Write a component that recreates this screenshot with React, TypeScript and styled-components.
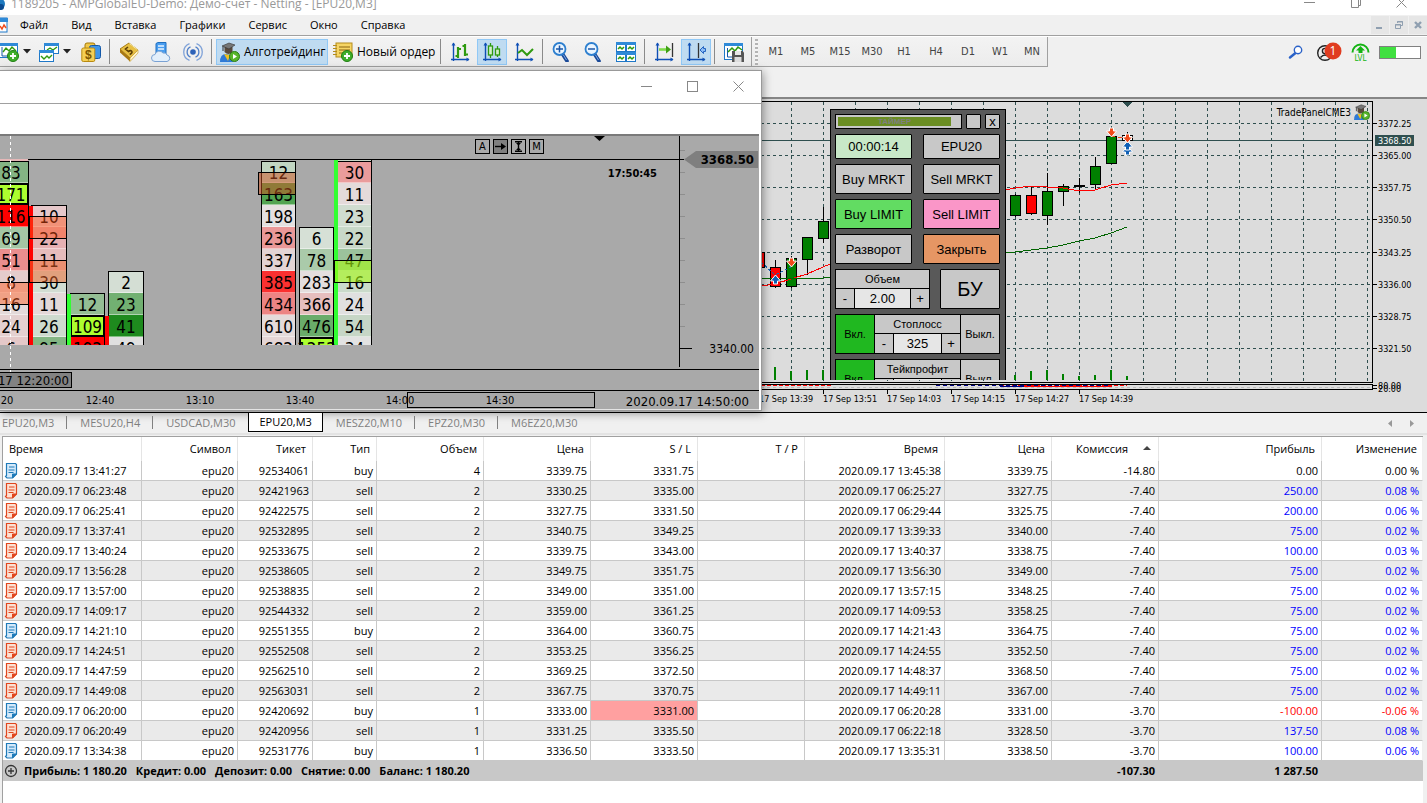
import React from "react";
import styled, { createGlobalStyle, css } from "styled-components";

const UI = `"Open Sans", "Noto Sans", sans-serif`;
const TAHOMA = `"DejaVu Sans Condensed", "DejaVu Sans", sans-serif`;
const ARIAL = `"Liberation Sans", Arial, sans-serif`;

const GlobalStyle = createGlobalStyle`
  * { box-sizing: border-box; }
  body { margin: 0; background: #f0f0f0; font-family: ${UI}; font-size: 12px; color: #000; overflow: hidden; }
  button, input { font: inherit; color: inherit; margin: 0; padding: 0; border: 0; background: none; border-radius: 0; }
  svg { display: block; }
`;

const Shell = styled.div`
  display: flex;
  flex-direction: column;
  min-height: 100vh;
`;

/* ---------- title and menu ---------- */

const TitleBar = styled.header`
  display: flex;
  justify-content: space-between;
  height: 15px;
  background: #fff;
  color: #999;
  overflow: hidden;
`;
const TitleText = styled.div`
  display: flex;
  gap: 5px;
  margin-top: -5px;
  line-height: 17px;
  white-space: nowrap;
`;
const TitleControls = styled.div`
  display: flex;
  gap: 35px;
  margin-top: -10px;
  padding-right: 20px;
`;
const PlainButton = styled.button`
  display: flex;
  align-items: center;
  justify-content: center;
`;

const MenuBar = styled.nav`
  display: flex;
  align-items: center;
  gap: 1px;
  height: 21px;
  background: #f0f0f0;
  border-bottom: 1px solid #a0a0a0;
  font-size: 11px;
`;
const MenuItem = styled.button`
  padding: 0 11px;
  line-height: 18px;
`;
const MdiButtons = styled.div`
  display: flex;
  gap: 1px;
  margin-left: auto;
`;
const MdiButton = styled(PlainButton)`
  width: 18px;
  height: 18px;
  background: #e6e6e6;
`;

/* ---------- toolbar ---------- */

const ToolRow = styled.div`
  display: flex;
  justify-content: space-between;
  height: 31px;
  border-top: 1px solid #fff;
`;
const Toolbar = styled.div`
  display: flex;
  align-items: center;
  gap: 2px;
  margin-left: -4px;
  border-bottom: 1px solid #a0a0a0;
  border-right: 1px solid #a0a0a0;
  background: linear-gradient(#f3f3f3, #ececec);
`;
const ToolButton = styled.button<{ $on?: boolean; $split?: boolean; $wide?: number }>`
  display: flex;
  align-items: center;
  justify-content: ${(p) => (p.$wide ? "flex-start" : "center")};
  gap: 4px;
  width: ${(p) => (p.$wide ? p.$wide : p.$split ? 38 : 30)}px;
  height: 26px;
  padding-left: ${(p) => (p.$wide ? 3 : 0)}px;
  white-space: nowrap;
  ${(p) => p.$on && css`background: #bfdbf1; border: 1px solid #90c8f6;`}
`;
const Separator = styled.span`
  width: 1px;
  height: 25px;
  margin: 0 2px 0 1px;
  background: #8a8a8a;
`;
const Grip = styled.span`
  width: 3px;
  height: 26px;
  margin: 0 1px;
  background: repeating-linear-gradient(#b4b4b4 0 2px, #f4f4f4 2px 4px);
`;
const Divider = styled.span`
  width: 1px;
  height: 30px;
  background: #a0a0a0;
`;
const Frame = styled.button`
  width: 30px;
  height: 26px;
  font-family: ${TAHOMA};
  font-size: 11px;
  color: #444;
`;
const Status = styled.div`
  display: flex;
  align-items: center;
  gap: 9px;
  padding-right: 6px;
`;
const Meter = styled.div`
  width: 42px;
  height: 13px;
  border: 1px solid #808080;
  background: linear-gradient(90deg, #40e040 0 40%, #fff 40%);
`;

/* ---------- workspace ---------- */

const Workspace = styled.main`
  position: relative;
  display: flex;
  flex-direction: column;
`;
const DockStrip = styled.div`
  height: 32px;
  border-bottom: 2px solid #868686;
`;
const ChartArea = styled.section`
  display: flex;
  height: 314px;
  padding-top: 2px;
  background: #dcdcdc;
  border-bottom: 1px solid #000;
`;
const PlotColumn = styled.div`
  flex: 1;
  min-width: 0;
`;
const PricePane = styled.div`
  position: relative;
  height: 282px;
  overflow: hidden;
  border: solid #000;
  border-width: 1px 1px 1px 0;
`;
const ExpertTag = styled.div`
  position: absolute;
  top: 2px;
  right: 2px;
  display: flex;
  align-items: center;
  gap: 3px;
  font-family: ${TAHOMA};
  font-size: 10px;
`;
const ChartSvg = styled.svg`
  width: 100%;
  font-family: ${TAHOMA};
`;
const AxisSvg = styled.svg`
  width: 54px;
  font-family: ${TAHOMA};
`;

/* ---------- trade panel ---------- */

const PanelClip = styled.div`
  position: absolute;
  left: 830px;
  top: 7px;
  bottom: 2px;
  overflow: hidden;
`;
const Panel = styled.div`
  width: 176px;
  display: flex;
  flex-direction: column;
  gap: 5px;
  padding: 4px 5px 4px 4px;
  background: #595959;
  border: 1px solid #000;
  font-family: ${ARIAL};
`;
const PanelRow = styled.div<{ $gap: number }>`
  display: flex;
  gap: ${(p) => p.$gap}px;
`;
const Timer = styled.div`
  display: flex;
  flex: 1;
  height: 15px;
  padding: 2px 0 2px 2px;
  background: #c8c8c8;
  border: 1px solid #000;
`;
const TimerFill = styled.span`
  width: 113px;
  background: #6b8e23;
  color: #7f7f7f;
  font-size: 8px;
  font-weight: 700;
  line-height: 9px;
  text-align: center;
`;
const PanelButton = styled.button<{ $h: number; $bg?: string; $w?: number; $size?: number }>`
  flex: ${(p) => (p.$w ? "none" : 1)};
  width: ${(p) => (p.$w ? p.$w + "px" : "auto")};
  height: ${(p) => p.$h}px;
  background: ${(p) => p.$bg ?? "#c8c8c8"};
  border: 1px solid #000;
  border-radius: 1px;
  font-size: ${(p) => p.$size ?? 13}px;
  line-height: 13px;
  white-space: nowrap;
`;
const Box = styled.div<{ $w: number }>`
  display: flex;
  gap: 1px;
  width: ${(p) => p.$w}px;
  height: 40px;
  border: 1px solid #000;
  background: #000;
  font-size: 11px;
`;
const BoxSide = styled.button<{ $bg?: string }>`
  width: 38px;
  background: ${(p) => p.$bg ?? "#c8c8c8"};
`;
const BoxMid = styled.div`
  flex: 1;
  display: flex;
  flex-direction: column;
  gap: 1px;
  min-width: 0;
`;
const BoxLabel = styled.label`
  height: 18px;
  line-height: 19px;
  text-align: center;
  background: #c8c8c8;
`;
const Spinner = styled.div`
  flex: 1;
  display: flex;
  gap: 1px;
`;
const Step = styled.button`
  width: 18px;
  background: #c8c8c8;
  font-size: 13px;
  line-height: 13px;
`;
const Value = styled.input`
  flex: 1;
  min-width: 0;
  width: 20px;
  background: #e6e6e6;
  text-align: center;
  font-size: 13px;
`;

/* ---------- floating cluster window ---------- */

const FloatWindow = styled.section`
  position: absolute;
  left: 0;
  top: 3px;
  width: 762px;
  display: flex;
  flex-direction: column;
  background: #fff;
  border: solid #999;
  border-width: 1px 1px 1px 0;
  box-shadow: 1px 2px 9px rgba(0, 0, 0, 0.4);
`;
const FloatTitle = styled.div`
  display: flex;
  justify-content: flex-end;
  align-items: center;
  gap: 35px;
  height: 33px;
  padding: 0 17px 2px 0;
  border-bottom: 1px solid #a0a0a0;
`;
const FloatSpacer = styled.div`
  height: 30px;
`;
const ClusterView = styled.div`
  position: relative;
  margin-right: 2px;
  border-top: 2px solid #7a7a7a;
  border-bottom: 1px solid #e4e4e4;
  background: #a9a9a9;
`;
const ClusterTools = styled.div`
  position: absolute;
  left: 475px;
  top: 3px;
  display: flex;
  gap: 3px;
`;
const ClusterTool = styled(PlainButton)<{ $on?: boolean }>`
  width: 15px;
  height: 15px;
  border: 1px solid #000;
  background: ${(p) => (p.$on ? "#7f7f7f" : "transparent")};
  font-family: ${TAHOMA};
  font-size: 11px;
  line-height: 13px;
`;

/* ---------- tabs ---------- */

const Tabs = styled.div`
  display: flex;
  height: 22px;
  margin-bottom: 1px;
  margin-left: -11px;
  background: #f0f0f0;
  border-bottom: 2px solid #e3e3e3;
`;
const Tab = styled.button<{ $active?: boolean; $rule?: boolean }>`
  position: relative;
  height: ${(p) => (p.$active ? 19 : 20)}px;
  padding: 0 ${(p) => (p.$active ? 10 : 13)}px;
  font-size: 11px;
  line-height: 18px;
  color: ${(p) => (p.$active ? "#000" : "#7f7f7f")};
  ${(p) => p.$active && css`background: #fff; border: solid #000; border-width: 0 1px 1px;`}
  ${(p) => p.$rule && css`
    &::after { content: ""; position: absolute; right: 0; top: 3px; width: 1px; height: 13px; background: #808080; }
  `}
`;
const TabArrows = styled.div`
  display: flex;
  gap: 18px;
  margin-left: auto;
  padding-right: 13px;
`;

/* ---------- history table ---------- */

const HistoryFrame = styled.section`
  flex: 1;
  margin: 0 4px 0 2px;
  background: #fff;
  border: solid #a0a0a0;
  border-width: 1px 0 0 1px;
`;
const History = styled.table`
  width: 100%;
  table-layout: fixed;
  border-collapse: separate;
  border-spacing: 0;
  font-size: 11px;
  line-height: 18px;
  white-space: nowrap;
`;
const Head = styled.th<{ $left?: boolean }>`
  height: 24px;
  padding: 0 6px;
  font-weight: 400;
  text-align: ${(p) => (p.$left ? "left" : "right")};
  border-right: 1px solid #e5e5e5;
  &:last-child { padding-right: 5px; border-right-color: #efefef; }
`;
const SortMark = styled.span`
  display: inline-block;
  margin: 0 1px 3px 15px;
  border: solid transparent;
  border-width: 0 4px 4px;
  border-bottom-color: #444;
`;
const Row = styled.tr<{ $alt?: boolean }>`
  background: ${(p) => (p.$alt ? "#eaeaea" : "#fff")};
`;
const Cell = styled.td<{ $bg?: string; $color?: string }>`
  height: 20px;
  padding: 0 3px 0 0;
  text-align: right;
  border: solid #c8c8c8;
  border-width: 0 1px 1px 0;
  background: ${(p) => p.$bg ?? "transparent"};
  color: ${(p) => p.$color ?? "#000"};
  &:last-child { border-right-color: #efefef; }
`;
const TimeCell = styled(Cell)`
  padding: 0 0 0 1px;
  text-align: left;
`;
const WithIcon = styled.span`
  display: flex;
  align-items: center;
  gap: 6px;
`;
const SumRow = styled.tr`
  background: #c8c8c8;
  font-weight: 700;
`;
const SumCell = styled.td<{ $left?: boolean }>`
  height: 20px;
  padding: 0 4px 0 1px;
  text-align: ${(p) => (p.$left ? "left" : "right")};
`;
const SumParts = styled.span`
  display: flex;
  gap: 9px;
`;

/* ---------- icons ---------- */

const AXES = (
  <>
    <path d="M3.5 1v18M1 17.5h18" stroke="#0f4fb5" strokeWidth="1.4" fill="none" />
    <path d="M1.5 3.5L3.5 .5l2 3zM16.5 15.5l3 2-3 2z" fill="#0f4fb5" />
  </>
);
const PlusBadge = ({ x, y }: { x: number; y: number }) => (
  <g transform={`translate(${x},${y})`}>
    <circle r="5.5" fill="#3fae2a" stroke="#1f7f12" />
    <path d="M-3 0h6M0-3v6" stroke="#fff" strokeWidth="1.8" />
  </g>
);
const Icon = ({ children, size = 20 }: { children: React.ReactNode; size?: number }) => (
  <svg width={size} height={size} viewBox="0 0 20 20">{children}</svg>
);
const Caret = () => (
  <svg width="8" height="5" viewBox="0 0 8 5"><path d="M0 0h8L4 4.5z" fill="#222" /></svg>
);
const NewChartIcon = () => (
  <Icon>
    <rect x=".5" y="1.5" width="18" height="14" fill="#fff" stroke="#1f78c8" />
    <rect x="0" y="1" width="19" height="3" fill="#2f8ad8" />
    <path d="M3 5v9h12" stroke="#1659a8" fill="none" />
    <path d="M4 10l3-4 3 3 3-4 4 4" stroke="#2f9a10" strokeWidth="1.4" fill="none" />
    <PlusBadge x={14} y={14} />
  </Icon>
);
const WindowsIcon = () => (
  <Icon>
    <rect x="5.5" y="1.5" width="14" height="10" fill="#fff" stroke="#1f78c8" />
    <rect x="5" y="1" width="15" height="3" fill="#2f8ad8" />
    <path d="M8 8l3-2 3 2 4-3" stroke="#2f9a10" strokeWidth="1.4" fill="none" />
    <rect x=".5" y="8.5" width="14" height="11" fill="#fff" stroke="#1f78c8" />
    <rect x="0" y="8" width="15" height="3" fill="#2f8ad8" />
    <path d="M2 14l3 3 3-3 2 2 3-3" stroke="#2f9a10" strokeWidth="1.4" fill="none" />
  </Icon>
);
const DollarIcon = () => (
  <Icon>
    <path d="M4 7V3q0-2 2-2h6q2 0 2 2v6H4z" fill="#f0c84a" stroke="#a57808" />
    <rect x="8.5" y="3.5" width="11" height="13" rx="2" fill="#3f96ea" stroke="#1358a8" />
    <rect x=".8" y="6" width="13" height="13.5" rx="1.500" fill="#f4cf55" stroke="#b98a10" />
    <text x="7.3" y="17" fontFamily={ARIAL} fontSize="12" fontWeight="700" fill="#7d5600" textAnchor="middle">$</text>
  </Icon>
);
const BookIcon = () => (
  <Icon>
    <path d="M1 7L10 1l9 7-8 8z" fill="#e7bf43" stroke="#a87c12" />
    <path d="M1 7l10 9v3.500L1 10.500z" fill="#a87812" />
    <path d="M11 16l8-8v3l-8 8.500z" fill="#fff3c8" stroke="#c89a26" strokeWidth=".6" />
    <path d="M9 5L6.500 7l3 2.500q2-1.500 3.200-.2t-2 3.200" stroke="#5c3e04" strokeWidth="1.600" fill="none" />
    <path d="M10.500 1.500l8 6.200" stroke="#fff3b5" />
  </Icon>
);
const CloudIcon = () => (
  <Icon>
    <path d="M5 1.500l2-1h8v13H5z" fill="#4a9ef0" stroke="#1f6fc0" />
    <path d="M7 4h6M7 7h6" stroke="#e6f3ff" strokeWidth="1.500" />
    <path d="M4 19.500a3.500 3.500 0 010-7 4.500 4.500 0 018-1.500 3.500 3.500 0 014 2 3.300 3.300 0 010 6.500z" fill="#e3effb" stroke="#7aa2d4" />
  </Icon>
);
const SignalIcon = () => (
  <Icon>
    <g fill="none" stroke="#7fa2d8" strokeWidth="1.300">
      <path d="M6.500 1.600a9 9 0 000 16.800M13.500 1.600a9 9 0 010 16.800" />
      <path d="M7.500 4.800a5.700 5.700 0 000 10.400M12.500 4.800a5.700 5.700 0 010 10.400" stroke="#4f7fc8" />
    </g>
    <circle cx="10" cy="10" r="2.800" fill="#2d62b8" />
  </Icon>
);
const ExpertIcon = ({ size = 20 }: { size?: number }) => (
  <Icon size={size}>
    <path d="M0 20q0-8 6-8t7 8z" fill="#2f7ad6" />
    <path d="M4 12l4 7 2-6z" fill="#f0c020" />
    <path d="M4.500 5h8v5q-4 4-8 0z" fill="#5a4a3c" />
    <path d="M2 4l7-3 6 2-6 4z" fill="#777" stroke="#333" strokeWidth=".6" />
    <path d="M3 4.500V9" stroke="#333" />
    <circle cx="14.500" cy="14.500" r="5" fill="#58b52c" stroke="#2b7d10" />
    <path d="M13 12v5l4-2.500z" fill="#fff" />
  </Icon>
);
const OrderIcon = () => (
  <Icon>
    <rect x="3" y="1" width="16" height="14" fill="#f6d564" stroke="#b48c1c" />
    <path d="M0 3.500h4M0 6.500h4M0 9.500h4M0 12.500h4" stroke="#b48c1c" />
    <path d="M6 5h11M6 8h11M6 11h8" stroke="#8a6410" />
    <PlusBadge x={14} y={14} />
  </Icon>
);
const BarsIcon = () => (
  <Icon>{AXES}<path d="M8 5v11M5.500 14h2.500M8 7h3M15 2v12M12.500 4H15M15 12.500h3" stroke="#2f9a10" strokeWidth="2.200" fill="none" /></Icon>
);
const CandleIcon = () => (
  <Icon>
    {AXES}
    <path d="M8.500 1v15M15.500 4v11" stroke="#2f9a10" strokeWidth="1.300" />
    <rect x="6.500" y="4" width="4" height="9" fill="#d5efcc" stroke="#2f9a10" strokeWidth="1.300" />
    <rect x="13.500" y="7" width="4" height="6" fill="#d5efcc" stroke="#2f9a10" strokeWidth="1.300" />
  </Icon>
);
const LineIcon = () => (
  <Icon>{AXES}<path d="M4 11l4-3 5 5 6-6" stroke="#2f9a10" strokeWidth="2" fill="none" /></Icon>
);
const ZoomIcon = ({ plus }: { plus?: boolean }) => (
  <Icon>
    <path d="M10.500 12l4.500 7" stroke="#1a4a98" strokeWidth="3.600" strokeLinecap="round" />
    <path d="M11.500 13l3 5" stroke="#7aa8e8" strokeWidth="1" />
    <circle cx="7.500" cy="7" r="6" fill="#eaf5ff" stroke="#2d7fcf" strokeWidth="1.800" />
    <path d={plus ? "M4 7h7M7.500 3.500v7" : "M4 7h7"} stroke="#1a56a8" strokeWidth="1.500" />
  </Icon>
);
const TileIcon = () => (
  <Icon>
    {[[0, 0], [10, 0], [0, 10], [10, 10]].map(([x, y]) => (
      <g key={`${x}-${y}`} transform={`translate(${x},${y})`}>
        <rect x=".5" y=".5" width="9" height="9" fill="#fff" stroke="#1f78c8" />
        <rect width="10" height="3" fill="#2f8ad8" />
        <path d="M2 7l2-2 2 2 2-2" stroke="#2f9a10" strokeWidth="1.500" fill="none" />
      </g>
    ))}
  </Icon>
);
const ScrollIcon = () => (
  <Icon>{AXES}<path d="M5 7.500h8" stroke="#7fdc4a" strokeWidth="2.600" /><path d="M12 3.500l5 4-5 4z" fill="#3fa015" /><path d="M18.500 1v14" stroke="#333" strokeWidth="1.300" /></Icon>
);
const ShiftIcon = () => (
  <Icon>{AXES}<path d="M12.500 1v15" stroke="#333" strokeWidth="1.300" /><path d="M19.500 6.500h-2v-2L14 8l3.500 3.500v-2h2z" fill="#8dbcf5" stroke="#2563c0" /></Icon>
);
const SaveChartIcon = () => (
  <Icon>
    <rect x=".5" y="1.500" width="18" height="16" fill="#fff" stroke="#1f78c8" />
    <rect x="0" y="1" width="19" height="3" fill="#2f8ad8" />
    <path d="M3.500 6v9h6" stroke="#1659a8" fill="none" />
    <path d="M4 10l4-4 3 3 3-4 4 3" stroke="#2f9a10" strokeWidth="1.500" fill="none" />
    <path d="M8 9h10.500l1.500 1.500V20H8z" fill="#555" />
    <rect x="11" y="9" width="6" height="4" fill="#e8e8e8" />
    <rect x="10.500" y="15" width="7" height="5" fill="#ddd" />
  </Icon>
);
const DealIcon = ({ kind }: { kind: string }) => {
  const line = kind === "buy" ? "#1f7ab8" : "#e0461e";
  const fill = kind === "buy" ? "#d4e9fa" : "#fde0d2";
  return (
    <svg width="14" height="18" viewBox="0 0 14 18">
      <path d="M2.500 1.500h9l1 1v9.500l-4 4H3l-1.500-1.500 1-1z" fill={fill} stroke={line} strokeWidth="1.200" />
      <path d="M5 5h5.500M4.500 8h6M4.500 10.500h5" stroke={line} strokeWidth="1" />
      <path d="M12.500 12l-4 4v-4z" fill={line} stroke={line} strokeLinejoin="round" />
    </svg>
  );
};
const PlusCircle = () => (
  <svg width="14" height="14" viewBox="0 0 14 14">
    <circle cx="7" cy="7" r="5.500" fill="none" stroke="#333" strokeWidth="1.300" />
    <path d="M4 7h6M7 4v6" stroke="#333" strokeWidth="1.300" />
  </svg>
);
const WinGlyph = ({ kind, size = 11 }: { kind: "min" | "max" | "restore" | "close"; size?: number }) => (
  <svg width={size} height={size} viewBox="0 0 11 11" fill="none" stroke="#888">
    {kind === "min" && <path d="M0 5.500h11" />}
    {kind === "max" && <rect x=".5" y=".5" width="10" height="10" />}
    {kind === "restore" && <path d="M1.500 2.500h7v8h-7zM3.500 2.500v-2h7v8h-2" />}
    {kind === "close" && <path d="M.5.5l10 10M10.500.5l-10 10" />}
  </svg>
);
const MdiGlyph = ({ kind }: { kind: string }) => (
  <svg width="10" height="10" viewBox="0 0 10 10" fill="none" stroke="#8f9fb0">
    {kind === "min" && <path d="M1 8h6" strokeWidth="2" />}
    {kind === "restore" && <path d="M1.500 4.500h5v4h-5zM1 5h6M3.500 3V1.500h5v4H7M3 2h6" />}
    {kind === "close" && <path d="M2 2l6 6M8 2L2 8" strokeWidth="2.400" />}
  </svg>
);

/* ---------- main chart ---------- */

const GRID_X = Array.from({ length: 60 }, (_, i) => 791 + 32 * i);
const LEVELS: [number, string][] = [
  [123, "3372.25"], [155, "3365.00"], [187, "3357.75"], [219, "3350.50"],
  [252, "3343.25"], [284, "3336.00"], [316, "3328.75"], [348, "3321.50"],
];
const GREEN = "#008000";
const CANDLES: [number, number, number, number, number, string][] = [
  [759, 252, 267, 250, 268, "#f00"], [775, 267, 286, 260, 288, "#f00"], [791, 258, 286, 256, 288, GREEN],
  [807, 237, 259, 237, 275, GREEN], [823, 221, 238, 207, 243, GREEN], [1015, 195, 215, 194, 217, GREEN],
  [1031, 195, 213, 187, 215, "#f00"], [1047, 191, 215, 173, 225, GREEN], [1063, 186, 191, 184, 206, GREEN],
  [1079, 185, 186, 178, 193, "#000"], [1095, 166, 184, 157, 190, GREEN], [1111, 136, 163, 130, 163, GREEN],
  [1127, 135, 140, 132, 143, "#fff"],
];
const VOLUMES: [number, number][] = [
  [775, 13], [791, 9], [807, 10], [823, 10], [1015, 5], [1031, 9], [1047, 10], [1063, 6], [1079, 4], [1095, 5], [1111, 10], [1127, 4],
];
const Arrow = ({ x, y, up }: { x: number; y: number; up?: boolean }) => (
  <path
    transform={`translate(${x + 0.5},${y}) scale(1,${up ? -1 : 1})`}
    d="M-2-4h4v3h3L0 5-5-1h3z"
    fill={up ? "#0f5fb4" : "#f04a1a"}
    stroke="#fff"
  />
);

const PricePlot = () => (
  <ChartSvg height="280" role="img" aria-label="EPU20,M3">
    <g transform="translate(0,-102)" shapeRendering="crispEdges">
      <g stroke="#2f4f4f" strokeDasharray="3 3">
        {GRID_X.map((x) => <line key={x} x1={x + 0.5} x2={x + 0.5} y1="102" y2="382" />)}
        {LEVELS.map(([y]) => <line key={y} x1="761" x2="100%" y1={y + 0.5} y2={y + 0.5} />)}
      </g>
      <line x1="761" x2="100%" y1="140.500" y2="140.500" stroke="#2f4f4f" />
      {CANDLES.map(([x, top, bottom, high, low, color]) => (
        <g key={x} stroke="#000">
          <line x1={x + 0.5} x2={x + 0.5} y1={high} y2={low} />
          <rect x={x - 4.5} y={top + 0.5} width="10" height={bottom - top} fill={color} />
        </g>
      ))}
      {VOLUMES.map(([x, h]) => <rect key={x} x={x - 1} y={380 - h} width="2" height={h} fill={GREEN} />)}
      <g fill="none">
        <path d="M761 286L775 284 791 279 807 274 823 267 830 264" stroke="#f00" />
        <path d="M1005 190L1015 188 1031 186 1047 187 1063 188 1079 191 1095 190 1111 185 1127 183" stroke="#f00" />
        <path d="M761 278H823L830 277" stroke="#006400" />
        <path d="M1005 253L1015 252 1031 250 1047 248 1063 245 1079 241 1095 238 1111 233 1127 227" stroke="#006400" />
        <path d="M761 262L775 275 791 267" stroke="#1464b4" strokeDasharray="3 2" />
        <path d="M1111 136L1127 139" stroke="#f04a1a" strokeDasharray="4 3" />
      </g>
      <path d="M1122 102h11l-5.500 5z" fill="#2f4f4f" />
    </g>
    <g transform="translate(0,-102)">
      <Arrow x={791} y={262} />
      <Arrow x={775} y={280} up />
      <Arrow x={1111} y={132} />
      <Arrow x={1127} y={151} up />
      <Arrow x={1127} y={146} up />
      <Arrow x={1127} y={138} />
    </g>
  </ChartSvg>
);

const TIMES: [number, string][] = [
  [759, "17 Sep 13:39"], [823, "17 Sep 13:51"], [887, "17 Sep 14:03"], [951, "17 Sep 14:15"], [1015, "17 Sep 14:27"], [1079, "17 Sep 14:39"],
];
const TimePane = () => (
  <ChartSvg height="28">
    <g transform="translate(0,-383)" shapeRendering="crispEdges">
      <path d="M761 387.500h4000" stroke="#bbb" strokeDasharray="3 3" />
      <rect y="384" width="100%" height="1" fill="#000" />
      <rect y="389" width="100%" height="1" fill="#000" />
      <rect x="100%" y="384" width="1" height="6" transform="translate(-1,0)" fill="#000" />
      <path d="M761 385.500h70M1000 385.500h127" stroke="#f00" strokeDasharray="4 2" />
      <path d="M936 385.500h175" stroke="#000080" strokeDasharray="4 3" />
      <path d="M1000 386.500h24" stroke="#000080" />
      <path d="M1024 386.500h88" stroke="#f00" />
      {TIMES.map(([x]) => <rect key={x} x={x} y="390" width="1" height="4" fill="#000" />)}
    </g>
    <g fontSize="9">
      {TIMES.map(([x, t]) => <text key={x} x={x} y="19">{t}</text>)}
    </g>
  </ChartSvg>
);

const PriceAxis = () => (
  <AxisSvg height="310" fontSize="9">
    <g transform="translate(0,-101)">
      {LEVELS.map(([y, t]) => (
        <g key={y}>
          <rect y={y} width="4" height="1" />
          <text x="5" y={y + 4}>{t}</text>
        </g>
      ))}
      <rect x="2" y="135" width="39" height="11" fill="#2f4f4f" />
      <text x="5" y="144" fill="#fff">3368.50</text>
      <rect y="385" width="4" height="1" />
      <rect y="388" width="4" height="1" />
      <text x="5" y="389">80.00</text>
      <text x="5" y="392">20.00</text>
    </g>
  </AxisSvg>
);

/* ---------- trade panel ---------- */

const StopBox = ({ label, value, id }: { label: string; value: string; id: string }) => (
  <Box $w={165}>
    <BoxSide $bg="#20b820">Вкл.</BoxSide>
    <BoxMid>
      <BoxLabel htmlFor={id}>{label}</BoxLabel>
      <Spinner>
        <Step>-</Step>
        <Value id={id} defaultValue={value} />
        <Step>+</Step>
      </Spinner>
    </BoxMid>
    <BoxSide>Выкл.</BoxSide>
  </Box>
);

const TradePanel = () => (
  <PanelClip>
    <Panel>
      <PanelRow $gap={4}>
        <Timer><TimerFill>ТАЙМЕР</TimerFill></Timer>
        <PanelButton $h={15} $w={15} aria-label="Свернуть" />
        <PanelButton $h={15} $w={15}>x</PanelButton>
      </PanelRow>
      <PanelRow $gap={11}>
        <PanelButton $h={25} $bg="#c8e8c8">00:00:14</PanelButton>
        <PanelButton $h={25}>EPU20</PanelButton>
      </PanelRow>
      <PanelRow $gap={11}>
        <PanelButton $h={30}>Buy MRKT</PanelButton>
        <PanelButton $h={30}>Sell MRKT</PanelButton>
      </PanelRow>
      <PanelRow $gap={11}>
        <PanelButton $h={30} $bg="#62dc62">Buy LIMIT</PanelButton>
        <PanelButton $h={30} $bg="#fa96c8">Sell LIMIT</PanelButton>
      </PanelRow>
      <PanelRow $gap={11}>
        <PanelButton $h={30}>Разворот</PanelButton>
        <PanelButton $h={30} $bg="#e69664">Закрыть</PanelButton>
      </PanelRow>
      <PanelRow $gap={10}>
        <Box $w={95}>
          <BoxMid>
            <BoxLabel htmlFor="volume">Объем</BoxLabel>
            <Spinner>
              <Step>-</Step>
              <Value id="volume" defaultValue="2.00" />
              <Step>+</Step>
            </Spinner>
          </BoxMid>
        </Box>
        <PanelButton $h={40} $size={20}>БУ</PanelButton>
      </PanelRow>
      <StopBox id="stop" label="Стоплосс" value="325" />
      <StopBox id="take" label="Тейкпрофит" value="" />
    </Panel>
  </PanelClip>
);

/* ---------- cluster chart ---------- */

type Cluster = { x: number; w: number; top: number; cells: [string, string, boolean?][] };
const CLUSTERS: Cluster[] = [
  { x: -6, w: 34, top: 161, cells: [["83", "#84b484"], ["171", "#adff2f", true], ["116", "#ff0000"], ["69", "#a4c6a4"], ["51", "#ea8e8e"], ["8", "#e4cccc"], ["16", "#e4dada"], ["24", "#e4d0d0"], ["6", "#e4c8c8"]] },
  { x: 32, w: 34, top: 205, cells: [["10", "#e6c8ca"], ["22", "#e6b0b2"], ["11", "#e6bcbc"], ["30", "#d2dcd2"], ["11", "#e4d8d8"], ["26", "#cedace"], ["95", "#84b684"]] },
  { x: 71, w: 33, top: 293, cells: [["12", "#94be94"], ["109", "#adff2f", true], ["192", "#ff0000"]] },
  { x: 109, w: 34, top: 271, cells: [["2", "#d4ded4"], ["23", "#72b072"], ["41", "#1e8a1e"], ["49", "#e0e0e0"]] },
  { x: 262, w: 33, top: 161, cells: [["12", "#c2d6c2"], ["163", "#52a452"], ["198", "#e4e0e0"], ["236", "#ea9898"], ["337", "#e4d4d4"], ["385", "#fa3030"], ["434", "#ec8484"], ["610", "#e4dada"], ["682", "#e4d6d6"]] },
  { x: 300, w: 33, top: 227, cells: [["6", "#d6e0d6"], ["78", "#aacaaa"], ["283", "#e4dede"], ["366", "#e6bebe"], ["476", "#6aac6a"], ["1252", "#adff2f", true]] },
  { x: 338, w: 33, top: 161, cells: [["30", "#ea9c9c"], ["11", "#e4dada"], ["23", "#d0dcd0"], ["22", "#c8d8c8"], ["47", "#9cc29c"], ["16", "#cadaca"], ["24", "#e0e0e0"], ["54", "#c6d6c6"], ["34", "#e2e2e2"]] },
];
const ZONES: [number, number, number, string][] = [
  [258, 37, 172, "rgba(205,80,30,.5)"], [29, 37, 216, "rgba(255,80,20,.45)"], [29, 37, 260, "rgba(240,100,40,.5)"],
  [-4, 32, 282, "rgba(255,90,30,.45)"], [334, 37, 260, "rgba(165,250,20,.6)"],
];

const ClusterChart = () => (
  <ChartSvg height="273">
    <g transform="translate(0,-136)">
      <clipPath id="cells"><rect x="0" y="136" width="700" height="209" /></clipPath>
      <g clipPath="url(#cells)" fontSize="17" textAnchor="middle">
        <g shapeRendering="crispEdges">
          <rect x="0" y="159" width="28" height="2" fill="#e6b8b8" />
          <rect x="338" y="159" width="33" height="2" fill="#c8d8c8" />
          {CLUSTERS.map((c) => (
            <g key={c.x}>
              {c.cells.map(([, fill, peak], i) => (
                <g key={i}>
                  <rect x={c.x} y={c.top + i * 22} width={c.w} height="22" fill={fill} />
                  <rect x={c.x} y={c.top + i * 22 + 21} width={c.w} height="1" fill="#fff" opacity=".45" />
                  {peak && <rect x={c.x} y={c.top + i * 22 + 1} width={c.w} height="20" fill="none" stroke="#000" strokeWidth="2" />}
                </g>
              ))}
              <path d={`M${c.x - 0.5} ${c.top + 190}V${c.top + 0.5}H${c.x + c.w + 0.5}v200`} fill="none" stroke="#000" />
            </g>
          ))}
          <rect x="29" y="206" width="4" height="140" fill="#f00" />
          <rect x="67" y="294" width="4" height="52" fill="#32ff32" />
          <rect x="105" y="316" width="4" height="30" fill="#f00" />
          <rect x="334" y="159" width="4" height="187" fill="#32ff32" />
        </g>
        {CLUSTERS.map((c) =>
          c.cells.map(([t], i) => <text key={`${c.x}-${i}`} x={c.x + c.w / 2} y={c.top + i * 22 + 18}>{t}</text>)
        )}
        {ZONES.map(([x, w, y, fill]) => (
          <rect key={`${x}-${y}`} x={x + 0.5} y={y + 0.5} width={w} height="22" fill={fill} stroke="#000" />
        ))}
      </g>
      <g shapeRendering="crispEdges" fill="none" stroke="#000">
        <path d="M28 159.500H684M679.500 136V367M680 348.500h12M0 369.500H760M0 390.500H760M371.500 159v186" />
        <path d="M680 150.500h5M680 172.500h5M680 194.500h5M680 216.500h5M680 238.500h5M680 260.500h5M680 282.500h5M680 304.500h5M680 326.500h5" stroke="#8e8e8e" />
        <rect x="407.500" y="392.500" width="187" height="15" />
        <path d="M10.500 136V372" stroke="#fff" strokeDasharray="3 3" />
        <rect x="-4.500" y="372.500" width="76" height="15" fill="#828282" />
      </g>
      <path d="M594 136h11l-5.500 5z" />
      <path d="M684 159.500L696 151h62v17h-62z" fill="#7f7f7f" />
      <text x="754" y="164" fontSize="13" fontWeight="700" textAnchor="end">3368.50</text>
      <text x="657" y="177" fontSize="11" fontWeight="700" textAnchor="end">17:50:45</text>
      <text x="754" y="353" fontSize="12" textAnchor="end">3340.00</text>
      <g fontSize="13" textAnchor="end">
        <text x="749" y="406">2020.09.17 14:50:00</text>
        <text x="69" y="385">.17 12:20:00</text>
      </g>
      <g fontSize="11" textAnchor="middle">
        <text x="7" y="404">20</text>
        <text x="100" y="404">12:40</text>
        <text x="200" y="404">13:10</text>
        <text x="300" y="404">13:40</text>
        <text x="400" y="404">14:00</text>
        <text x="500" y="404">14:30</text>
      </g>
    </g>
  </ChartSvg>
);

/* ---------- data ---------- */

const COLUMNS: [string, number?][] = [
  ["Время", 139], ["Символ", 96], ["Тикет", 75], ["Тип", 64], ["Объем", 107], ["Цена", 107], ["S / L", 107],
  ["T / P", 107], ["Время", 140], ["Цена", 107], ["Комиссия", 107], ["Прибыль"], ["Изменение", 101],
];
const DEALS: string[][] = [
  ["13:41:27", "92534061", "buy", "4", "3339.75", "3331.75", "13:45:38", "3339.75", "-14.80", "0.00", "0.00 %"],
  ["06:23:48", "92421963", "sell", "2", "3330.25", "3335.00", "06:25:27", "3327.75", "-7.40", "250.00", "0.08 %"],
  ["06:25:41", "92422575", "sell", "2", "3327.75", "3331.50", "06:29:44", "3325.75", "-7.40", "200.00", "0.06 %"],
  ["13:37:41", "92532895", "sell", "2", "3340.75", "3349.25", "13:39:33", "3340.00", "-7.40", "75.00", "0.02 %"],
  ["13:40:24", "92533675", "sell", "2", "3339.75", "3343.00", "13:40:37", "3338.75", "-7.40", "100.00", "0.03 %"],
  ["13:56:28", "92538605", "sell", "2", "3349.75", "3351.75", "13:56:30", "3349.00", "-7.40", "75.00", "0.02 %"],
  ["13:57:00", "92538835", "sell", "2", "3349.00", "3351.00", "13:57:15", "3348.25", "-7.40", "75.00", "0.02 %"],
  ["14:09:17", "92544332", "sell", "2", "3359.00", "3361.25", "14:09:53", "3358.25", "-7.40", "75.00", "0.02 %"],
  ["14:21:10", "92551355", "buy", "2", "3364.00", "3360.75", "14:21:43", "3364.75", "-7.40", "75.00", "0.02 %"],
  ["14:24:51", "92552508", "sell", "2", "3353.25", "3356.25", "14:24:55", "3352.50", "-7.40", "75.00", "0.02 %"],
  ["14:47:59", "92562510", "sell", "2", "3369.25", "3372.50", "14:48:37", "3368.50", "-7.40", "75.00", "0.02 %"],
  ["14:49:08", "92563031", "sell", "2", "3367.75", "3370.75", "14:49:11", "3367.00", "-7.40", "75.00", "0.02 %"],
  ["06:20:00", "92420692", "buy", "1", "3333.00", "3331.00", "06:20:28", "3331.00", "-3.70", "-100.00", "-0.06 %"],
  ["06:20:49", "92420956", "sell", "1", "3331.25", "3335.50", "06:22:18", "3328.50", "-3.70", "137.50", "0.08 %"],
  ["13:34:38", "92531776", "buy", "1", "3336.50", "3333.50", "13:35:31", "3338.50", "-3.70", "100.00", "0.06 %"],
];
const tone = (v: string) => (v.startsWith("-") ? "#f00" : v === "0.00" || v === "0.00 %" ? "#000" : "#00f");

const HistoryTable = () => (
  <HistoryFrame>
    <History>
      <colgroup>
        {COLUMNS.map(([, w], i) => <col key={i} width={w} />)}
      </colgroup>
      <thead>
        <tr>
          {COLUMNS.map(([name], i) => (
            <Head key={i} $left={i === 0}>{name}{name === "Комиссия" && <SortMark />}</Head>
          ))}
        </tr>
      </thead>
      <tbody>
        {DEALS.map((d, i) => (
          <Row key={d[1]} $alt={i % 2 === 1}>
            <TimeCell><WithIcon><DealIcon kind={d[2]} />2020.09.17 {d[0]}</WithIcon></TimeCell>
            <Cell>epu20</Cell>
            <Cell>{d[1]}</Cell>
            <Cell>{d[2]}</Cell>
            <Cell>{d[3]}</Cell>
            <Cell>{d[4]}</Cell>
            <Cell $bg={d[9] === "-100.00" ? "#ffa0a0" : undefined}>{d[5]}</Cell>
            <Cell />
            <Cell>2020.09.17 {d[6]}</Cell>
            <Cell>{d[7]}</Cell>
            <Cell>{d[8]}</Cell>
            <Cell $color={tone(d[9])}>{d[9]}</Cell>
            <Cell $color={tone(d[10])}>{d[10]}</Cell>
          </Row>
        ))}
      </tbody>
      <tfoot>
        <SumRow>
          <SumCell $left colSpan={10}>
            <WithIcon>
              <PlusCircle />
              <SumParts>
                <span>Прибыль: 1 180.20</span><span>Кредит: 0.00</span><span>Депозит: 0.00</span>
                <span>Снятие: 0.00</span><span>Баланс: 1 180.20</span>
              </SumParts>
            </WithIcon>
          </SumCell>
          <SumCell>-107.30</SumCell>
          <SumCell>1 287.50</SumCell>
          <SumCell />
        </SumRow>
      </tfoot>
    </History>
  </HistoryFrame>
);

export default function App() {
  return (
    <Shell>
      <GlobalStyle />
      <TitleBar>
        <TitleText>
          <svg width="6" height="17" viewBox="0 0 6 17"><circle cx="-1" cy="9" r="6" fill="#1f7ac0" /><circle cx="1" cy="12" r="3" fill="#0b4a90" /></svg>
          <span>1189205 - AMPGlobalEU-Demo: Демо-счет - Netting - [EPU20,M3]</span>
        </TitleText>
        <TitleControls>
          <PlainButton aria-label="Свернуть окно"><WinGlyph kind="min" /></PlainButton>
          <PlainButton aria-label="Восстановить окно"><WinGlyph kind="restore" /></PlainButton>
          <PlainButton aria-label="Закрыть окно"><WinGlyph kind="close" /></PlainButton>
        </TitleControls>
      </TitleBar>

      <MenuBar>
        <svg width="8" height="17" viewBox="0 0 8 17">
          <rect x="-4" y="1" width="11" height="14" fill="#fff" stroke="#1f78c8" />
          <rect x="-4" y="1" width="12" height="4" fill="#2f8ad8" />
          <path d="M0 9l2 3 2-4 2 3" stroke="#f04a1a" strokeWidth="1.400" fill="none" />
        </svg>
        {["Файл", "Вид", "Вставка", "Графики", "Сервис", "Окно", "Справка"].map((m) => <MenuItem key={m}>{m}</MenuItem>)}
        <MdiButtons>
          {["min", "restore", "close"].map((k) => <MdiButton key={k} aria-label={k}><MdiGlyph kind={k} /></MdiButton>)}
        </MdiButtons>
      </MenuBar>

      <ToolRow>
        <Toolbar>
          <ToolButton $split aria-label="Новый график"><NewChartIcon /><Caret /></ToolButton>
          <ToolButton $split aria-label="Профили"><WindowsIcon /><Caret /></ToolButton>
          <ToolButton aria-label="Обзор рынка"><DollarIcon /></ToolButton>
          <Separator />
          <ToolButton aria-label="Маркет"><BookIcon /></ToolButton>
          <ToolButton aria-label="Хостинг"><CloudIcon /></ToolButton>
          <ToolButton aria-label="Сигналы"><SignalIcon /></ToolButton>
          <Separator />
          <ToolButton $on $wide={112}><ExpertIcon />Алготрейдинг</ToolButton>
          <ToolButton $wide={107}><OrderIcon />Новый ордер</ToolButton>
          <Separator />
          <ToolButton aria-label="Бары"><BarsIcon /></ToolButton>
          <ToolButton $on aria-label="Свечи"><CandleIcon /></ToolButton>
          <ToolButton aria-label="Линия"><LineIcon /></ToolButton>
          <Separator />
          <ToolButton aria-label="Увеличить"><ZoomIcon plus /></ToolButton>
          <ToolButton aria-label="Уменьшить"><ZoomIcon /></ToolButton>
          <ToolButton aria-label="Плитка"><TileIcon /></ToolButton>
          <Separator />
          <ToolButton aria-label="Автопрокрутка"><ScrollIcon /></ToolButton>
          <ToolButton $on aria-label="Сдвиг графика"><ShiftIcon /></ToolButton>
          <Separator />
          <ToolButton aria-label="Шаблоны"><SaveChartIcon /></ToolButton>
          <Divider />
          <Grip />
          {["M1", "M5", "M15", "M30", "H1", "H4", "D1", "W1", "MN"].map((t) => <Frame key={t}>{t}</Frame>)}
        </Toolbar>
        <Status>
          <svg width="20" height="14" viewBox="0 0 20 14">
            <path d="M8.500 8L3 12.500" stroke="#2a62c8" strokeWidth="2.400" strokeLinecap="round" />
            <circle cx="11" cy="5" r="3.700" fill="#fff" stroke="#2a62c8" strokeWidth="1.400" />
          </svg>
          <svg width="26" height="20" viewBox="0 0 26 20">
            <circle cx="9" cy="11" r="7.300" fill="none" stroke="#222" strokeWidth="1.400" />
            <circle cx="9" cy="9" r="2.600" fill="none" stroke="#222" strokeWidth="1.400" />
            <path d="M4.500 15.500q4.500-5 9 0" fill="none" stroke="#222" strokeWidth="1.400" />
            <circle cx="17" cy="9" r="8.500" fill="#e03c20" />
            <text x="17" y="13" fontFamily={UI} fontSize="12" fill="#fff" textAnchor="middle">1</text>
          </svg>
          <svg width="19" height="20" viewBox="0 0 19 20">
            <path d="M1.500 10.500a8 8 0 1116 0" fill="none" stroke="#14b414" strokeWidth="2" />
            <path d="M9.500 4l4.500 4.500h-2.500V11h-4V8.500H5z" fill="#14b414" />
            <text x="9.500" y="19" fontFamily={TAHOMA} fontSize="8" fill="#14b414" textAnchor="middle">LVL</text>
          </svg>
          <Meter />
        </Status>
      </ToolRow>

      <Workspace>
        <DockStrip />
        <ChartArea>
          <PlotColumn>
            <PricePane>
              <PricePlot />
              <TradePanel />
              <ExpertTag>TradePanelCME3<ExpertIcon size={16} /></ExpertTag>
            </PricePane>
            <TimePane />
          </PlotColumn>
          <PriceAxis />
        </ChartArea>

        <FloatWindow>
          <FloatTitle>
            <PlainButton aria-label="Свернуть"><WinGlyph kind="min" /></PlainButton>
            <PlainButton aria-label="Развернуть"><WinGlyph kind="max" /></PlainButton>
            <PlainButton aria-label="Закрыть"><WinGlyph kind="close" /></PlainButton>
          </FloatTitle>
          <FloatSpacer />
          <ClusterView>
            <ClusterChart />
            <ClusterTools>
              <ClusterTool>A</ClusterTool>
              <ClusterTool $on aria-label="Сдвиг">
                <svg width="11" height="9" viewBox="0 0 11 9"><path d="M0 4.500h7" stroke="#000" strokeWidth="1.400" /><path d="M6 1l5 3.500-5 3.500z" /></svg>
              </ClusterTool>
              <ClusterTool aria-label="Масштаб">
                <svg width="9" height="11" viewBox="0 0 9 11"><path d="M1 .7h7M1 10.300h7M4.500 1v9" stroke="#000" strokeWidth="1.400" /><path d="M2 2h5L4.500 4.500zM2 9h5L4.500 6.500z" /></svg>
              </ClusterTool>
              <ClusterTool>M</ClusterTool>
            </ClusterTools>
          </ClusterView>
        </FloatWindow>
      </Workspace>

      <Tabs>
        <Tab $rule>EPU20,M3</Tab>
        <Tab $rule>MESU20,H4</Tab>
        <Tab>USDCAD,M30</Tab>
        <Tab $active>EPU20,M3</Tab>
        <Tab $rule>MESZ20,M10</Tab>
        <Tab $rule>EPZ20,M30</Tab>
        <Tab>M6EZ20,M30</Tab>
        <TabArrows>
          <PlainButton aria-label="Назад"><svg width="4" height="7" viewBox="0 0 4 7"><path d="M4 0v7L0 3.500z" fill="#999" /></svg></PlainButton>
          <PlainButton aria-label="Вперёд"><svg width="4" height="7" viewBox="0 0 4 7"><path d="M0 0v7l4-3.500z" fill="#999" /></svg></PlainButton>
        </TabArrows>
      </Tabs>

      <HistoryTable />
    </Shell>
  );
}
